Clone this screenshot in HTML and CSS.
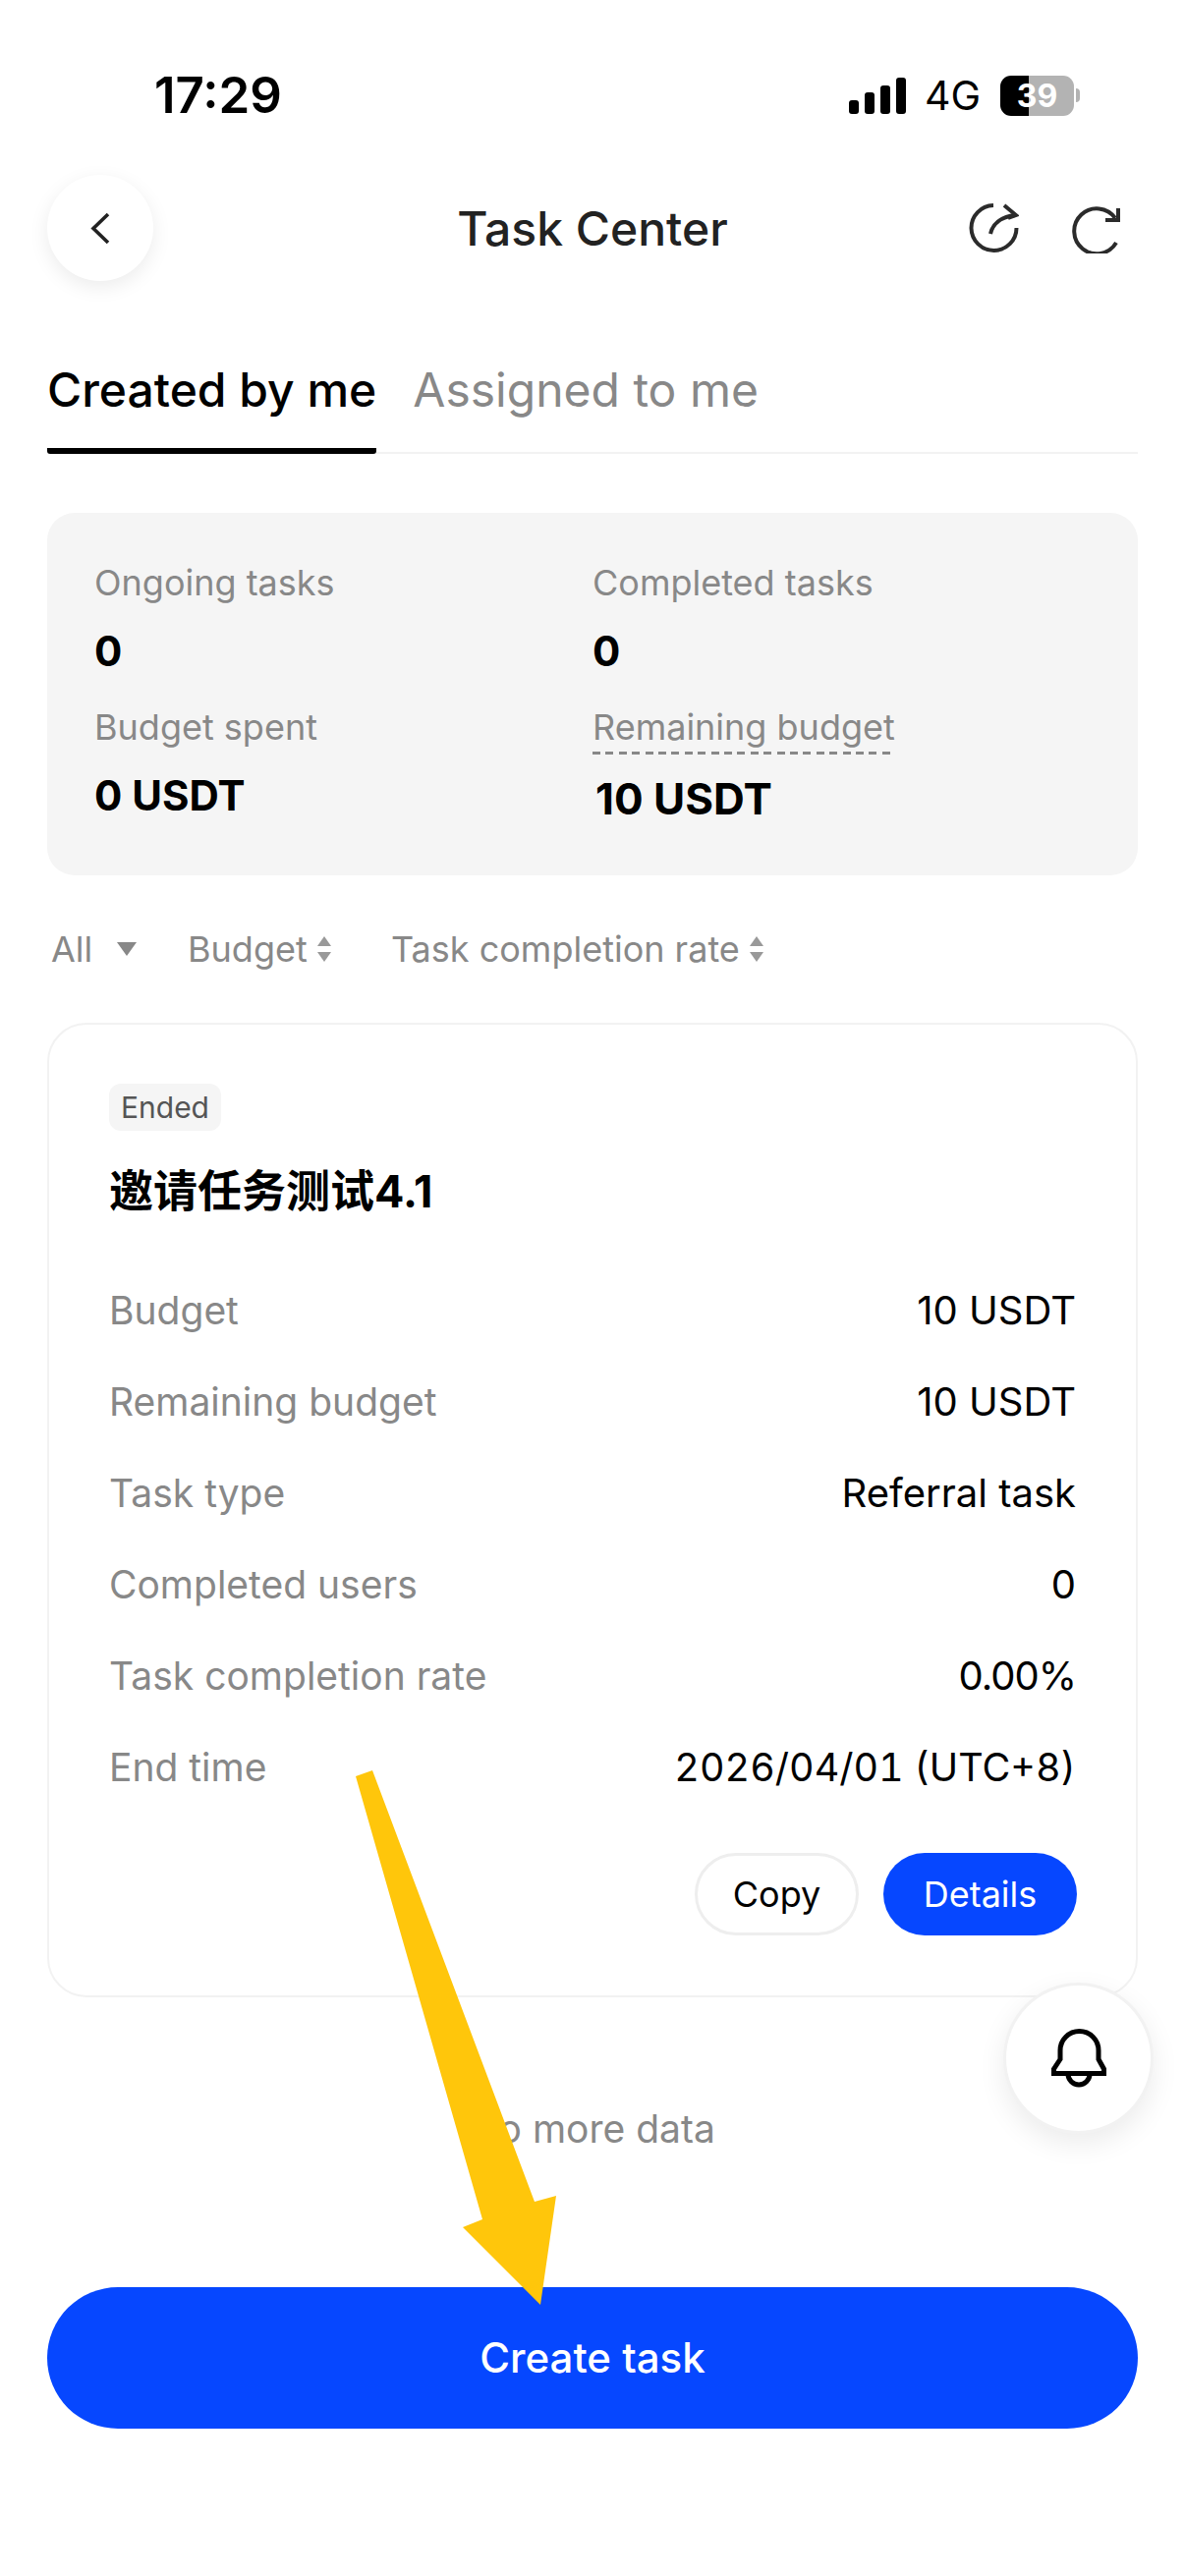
FILE: index.html
```html
<!DOCTYPE html>
<html lang="en">
<head>
    <meta charset="UTF-8">
    <meta name="viewport" content="width=device-width, initial-scale=1.0">
    <title>Task Center</title>
    <link rel="stylesheet" href="styles.css">
</head>
<body>

    <div class="status-bar">
        <span class="time">17:29</span>
        <div class="status-right">
            <svg class="signal" width="58" height="37" viewBox="0 0 58 37">
                <rect x="0" y="23" width="10" height="14" rx="3"/>
                <rect x="16" y="15" width="10" height="22" rx="3"/>
                <rect x="32" y="8" width="10" height="29" rx="3"/>
                <rect x="48" y="0" width="10" height="37" rx="3"/>
            </svg>
            <span class="network">4G</span>
            <div class="battery">39</div>
            <div class="battery-nub"></div>
        </div>
    </div>

    <header class="nav">
        <button class="back-btn" type="button">
            <svg width="22" height="33" viewBox="0 0 22 33" fill="none" stroke="#222" stroke-width="3.6">
                <path d="M19 2 L4 16.5 L19 31"/>
            </svg>
        </button>
        <h1>Task Center</h1>
        <div class="nav-icons">
            <svg width="52" height="52" viewBox="0 0 52 52" fill="none" stroke="#2b2b2b" stroke-width="4">
                <path d="M26 3 A23 23 0 1 0 49.5 26"/>
                <path d="M23 32 C25 23 32 15 48 13"/>
                <path d="M37 3 L49 13 L41 16"/>
            </svg>
            <svg width="52" height="52" viewBox="0 0 52 52" fill="none" stroke="#2b2b2b" stroke-width="4">
                <path d="M46 16 A23 23 0 1 0 47 41"/>
                <path d="M49 6 V18 H36"/>
            </svg>
        </div>
    </header>

    <div class="tabs">
        <div class="tab active">Created by me</div>
        <div class="tab">Assigned to me</div>
    </div>

    <section class="stats">
        <div class="stat">
            <div class="stat-label">Ongoing tasks</div>
            <div class="stat-value">0</div>
        </div>
        <div class="stat">
            <div class="stat-label">Completed tasks</div>
            <div class="stat-value">0</div>
        </div>
        <div class="stat">
            <div class="stat-label">Budget spent</div>
            <div class="stat-value">0 USDT</div>
        </div>
        <div class="stat">
            <div class="stat-label dashed">Remaining budget</div>
            <div class="stat-value shifted">10 USDT</div>
        </div>
    </section>

    <div class="filters">
        <div class="filter filter-all">All <span class="tri-down"></span></div>
        <div class="filter filter-budget">Budget <span class="sort"><i class="up"></i><i class="down"></i></span></div>
        <div class="filter">Task completion rate <span class="sort"><i class="up"></i><i class="down"></i></span></div>
    </div>

    <article class="task-card">
        <span class="tag">Ended</span>
        <h2>邀请任务测试4.1</h2>
        <div class="rows">
            <div class="row"><span>Budget</span><b>10 USDT</b></div>
            <div class="row"><span>Remaining budget</span><b>10 USDT</b></div>
            <div class="row"><span>Task type</span><b>Referral task</b></div>
            <div class="row"><span>Completed users</span><b>0</b></div>
            <div class="row"><span>Task completion rate</span><b class="tight">0.00%</b></div>
            <div class="row"><span>End time</span><b class="tabular">2026/04/01 (UTC+8)</b></div>
        </div>
        <div class="actions">
            <button class="btn-copy" type="button">Copy</button>
            <button class="btn-details" type="button">Details</button>
        </div>
    </article>

    <div class="no-more">No more data</div>

    <button class="create-btn" type="button">Create task</button>

    <!-- floating bell -->
    <div class="bell">
        <svg width="56" height="60" viewBox="0 0 56 60" fill="none" stroke="#000" stroke-width="5">
            <path d="M9 31 L2.5 41 V45.5 H53.5 V41 L48 31 V22 A19.5 19.5 0 0 0 9 22 Z"/>
            <path d="M17 46 A11 11 0 0 0 39 46"/>
        </svg>
    </div>

    <!-- annotation arrow -->
    <svg class="arrow" width="1206" height="2622" viewBox="0 0 1206 2622">
        <polygon points="362,1808 379,1802 544,2241 566,2235 550,2346 471,2267 491,2259" fill="#ffc60b"/>
    </svg>

</body>
</html>
```

FILE: styles.css
```css
* {
    box-sizing: border-box;
}

body {
    position: relative;
    margin: 0;
    width: 1206px;
    height: 2622px;
    overflow: hidden;
    padding: 0 48px;
    background-color: white;
    font-family: Inter, "Noto Sans CJK SC", sans-serif;
    color: #000;
}

button {
    font-family: inherit;
    border: none;
    cursor: pointer;
}

/* status bar */
.status-bar {
    display: flex;
    justify-content: space-between;
    align-items: center;
    height: 118px;
    padding: 76px 59px 0 109px;
}

.time {
    font-size: 51px;
    font-weight: 600;
    line-height: 44px;
}

.status-right {
    display: flex;
    align-items: center;
}

.signal {
    fill: #000;
}

.network {
    font-size: 41px;
    margin-left: 19px;
    margin-right: 20px;
}

.battery {
    width: 75px;
    height: 41px;
    border-radius: 11px;
    background: linear-gradient(90deg, #000 39%, #b3b3b3 39%);
    color: white;
    font-size: 32px;
    font-weight: 700;
    line-height: 41px;
    text-align: center;
}

.battery-nub {
    width: 4px;
    height: 14px;
    margin-left: 2px;
    border-radius: 0 4px 4px 0;
    background-color: #b3b3b3;
}

/* nav */
.nav {
    display: grid;
    grid-template-columns: 1fr auto 1fr;
    align-items: center;
    height: 108px;
    margin-top: 60px;
}

.nav h1 {
    margin: 0;
    font-size: 48px;
    font-weight: 500;
    color: #222;
}

.back-btn {
    display: flex;
    justify-content: center;
    align-items: center;
    width: 108px;
    height: 108px;
    border-radius: 50%;
    background-color: white;
    box-shadow: 0 6px 20px rgba(0, 0, 0, 0.08);
}

.nav-icons {
    display: flex;
    justify-content: flex-end;
    gap: 52px;
    margin-right: 17px;
}

/* tabs */
.tabs {
    display: flex;
    gap: 37px;
    height: 122px;
    margin-top: 54px;
    padding-top: 27px;
    border-bottom: 2px solid #f2f2f2;
}

.tab {
    font-size: 48px;
    line-height: 60px;
    color: #888;
}

.tab.active {
    height: 122px;
    margin-top: -27px;
    padding-top: 27px;
    color: #000;
    font-weight: 500;
    border-bottom: 6px solid #000;
    border-radius: 0 0 3px 3px;
}

/* stats */
.stats {
    display: grid;
    grid-template-columns: 507px 1fr;
    align-content: start;
    height: 369px;
    margin-top: 60px;
    padding: 49px 48px 0;
    border-radius: 28px;
    background-color: #f5f5f5;
}

.stat {
    height: 147px;
}

.stat-label {
    font-size: 36px;
    line-height: 44px;
    color: #888;
}

.stat-label.dashed {
    display: inline-block;
    height: 50px;
    background: repeating-linear-gradient(90deg, #888 0, #888 8px, transparent 8px, transparent 13.4px) left bottom / 100% 3px no-repeat;
}

.stat-value {
    margin-top: 23px;
    font-size: 42px;
    line-height: 50px;
    font-weight: 700;
}

.stat-value.shifted {
    margin-top: 20px;
    margin-left: 3px;
    font-size: 44px;
}

/* filters */
.filters {
    display: flex;
    align-items: center;
    height: 44px;
    margin-top: 53px;
    padding-left: 4px;
    font-size: 36px;
    color: #888;
}

.filter {
    display: flex;
    align-items: center;
    gap: 10px;
}

.filter-all {
    gap: 25px;
    width: 139px;
}

.filter-budget {
    width: 207px;
}

.tri-down {
    width: 0;
    height: 0;
    border-left: 10px solid transparent;
    border-right: 10px solid transparent;
    border-top: 14px solid #888;
}

.sort {
    display: flex;
    flex-direction: column;
    gap: 6px;
}

.sort i {
    display: block;
    width: 0;
    height: 0;
    border-left: 7px solid transparent;
    border-right: 7px solid transparent;
}

.sort .up {
    border-bottom: 10px solid #999;
}

.sort .down {
    border-top: 10px solid #999;
}

/* task card */
.task-card {
    height: 992px;
    margin-top: 53px;
    padding: 60px 60px 0 61px;
    border: 2px solid #f2f2f2;
    border-radius: 40px;
}

.tag {
    display: inline-block;
    height: 48px;
    padding: 0 12px;
    border-radius: 12px;
    background-color: #f5f5f5;
    color: #555;
    font-size: 30px;
    line-height: 48px;
}

.task-card h2 {
    margin: 36px 0 0;
    font-size: 45px;
    line-height: 52px;
    font-weight: 700;
}

.rows {
    margin-top: 48px;
}

.row {
    display: flex;
    justify-content: space-between;
    align-items: center;
    height: 93px;
    margin-right: 1px;
    font-size: 39px;
    color: #888;
}

.row b {
    font-size: 40px;
    font-weight: 400;
    color: #000;
}

.row b.tabular {
    font-size: 39.5px;
    font-variant-numeric: tabular-nums;
}

.row b.tight {
    letter-spacing: -1px;
}

.actions {
    display: flex;
    justify-content: flex-end;
    gap: 25px;
    margin-top: 41px;
}

.actions button {
    height: 84px;
    border-radius: 42px;
    font-size: 36px;
}

.btn-copy {
    width: 167px;
    background-color: white;
    border: 3px solid #eee;
    color: #000;
}

.btn-details {
    width: 197px;
    background-color: #0647ff;
    color: white;
}

.no-more {
    margin-top: 109px;
    text-align: center;
    font-size: 39px;
    line-height: 50px;
    color: #888;
}

.create-btn {
    display: block;
    width: 100%;
    height: 144px;
    margin-top: 136px;
    padding-bottom: 2px;
    border-radius: 72px;
    background-color: #0647ff;
    color: white;
    font-size: 42px;
    font-weight: 500;
}

/* things lying on top */
.bell {
    position: absolute;
    left: 1021px;
    top: 2018px;
    display: flex;
    justify-content: center;
    align-items: center;
    width: 153px;
    height: 154px;
    border-radius: 50%;
    background-color: white;
    border: 3px solid #f2f2f2;
    box-shadow: 0 10px 28px rgba(0, 0, 0, 0.08);
}

.arrow {
    position: absolute;
    left: 0;
    top: 0;
    pointer-events: none;
}
```
